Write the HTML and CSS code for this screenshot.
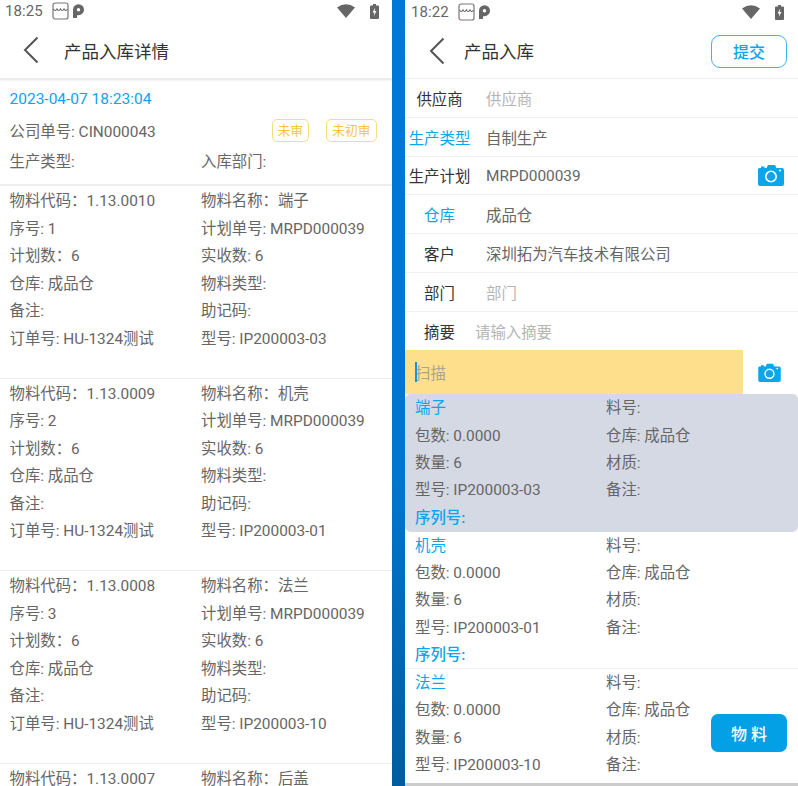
FILE: index.html
```html
<!DOCTYPE html>
<html lang="zh">
<head>
<meta charset="utf-8">
<title>产品入库</title>
<link rel="stylesheet" href="styles.css">
<svg class="defs" width="0" height="0" aria-hidden="true">
  <symbol id="shop" viewBox="0 0 17 18"><path d="M3 1h11a2 2 0 0 1 2 2v12a2 2 0 0 1-2 2H3a2 2 0 0 1-2-2V3a2 2 0 0 1 2-2z" fill="none" stroke="#777" stroke-width="1.2"/><path d="M1.500 7q1.700 3 3.500 0q1.700 3 3.500 0q1.700 3 3.500 0q1.700 3 3.500 0" fill="none" stroke="#666" stroke-width="1.200"/></symbol>
  <symbol id="park" viewBox="0 0 11 14"><path d="M0 5.700a5.500 5.500 0 1 1 5.500 5.500H4V14H0z" fill="#666"/><circle cx="5.500" cy="5.700" r="1.700" fill="#fff"/></symbol>
  <symbol id="wifi" viewBox="0 0 18 14"><path d="M0 3.500Q9-3 18 3.500L9 14z" fill="#666"/></symbol>
  <symbol id="batt" viewBox="0 0 9 15"><path d="M3 0h3v1.500h2a1 1 0 0 1 1 1V14a1 1 0 0 1-1 1H1a1 1 0 0 1-1-1V2.500a1 1 0 0 1 1-1h2z" fill="#666"/><path d="M5.200 3.500 2.600 8.500h1.700L3.800 12l2.700-5H4.700z" fill="#fff"/></symbol>
  <symbol id="back" viewBox="0 0 16 28"><path d="M14.500 1.500 2 14l12.500 12.500" fill="none" stroke="#555" stroke-width="2"/></symbol>
  <symbol id="cam" viewBox="0 0 26 22"><path d="M1.500 4H3V2.500h3.500V4h2L10 1h7l1.500 3H24a2 2 0 0 1 2 2v14a2 2 0 0 1-2 2H2a2 2 0 0 1-2-2V5.500A1.500 1.500 0 0 1 1.500 4z" fill="#0ba5ec"/><circle cx="13" cy="12.500" r="5.200" fill="none" stroke="#fff" stroke-width="1.600"/><circle cx="22" cy="6.500" r="1" fill="#fff"/></symbol>
</svg>
</head>
<body>
<div class="screen">
  <section class="panel">
    <div class="status">
      <span class="clock">18:25</span>
      <svg class="i-shop"><use href="#shop"/></svg><svg class="i-park"><use href="#park"/></svg>
      <span class="grow"></span>
      <svg class="i-wifi"><use href="#wifi"/></svg><svg class="i-batt"><use href="#batt"/></svg>
    </div>
    <header class="nav nav-left">
      <svg class="i-back"><use href="#back"/></svg>
      <h1 class="title">产品入库详情</h1>
    </header>
    <div class="summary">
      <div class="date">2023-04-07 18:23:04</div>
      <div class="company">
        <span>公司单号: CIN000043</span>
        <span class="tags"><span class="tag">未审</span><span class="tag">未初审</span></span>
      </div>
      <div class="pair"><span>生产类型:</span><span>入库部门:</span></div>
    </div>
    <div class="records">
      <div class="record">
        <span>物料代码：1.13.0010</span><span>物料名称：端子</span>
        <span>序号: 1</span><span>计划单号: MRPD000039</span>
        <span>计划数：6</span><span>实收数: 6</span>
        <span>仓库: 成品仓</span><span>物料类型:</span>
        <span>备注:</span><span>助记码:</span>
        <span>订单号: HU-1324测试</span><span>型号: IP200003-03</span>
      </div>
      <div class="record">
        <span>物料代码：1.13.0009</span><span>物料名称：机壳</span>
        <span>序号: 2</span><span>计划单号: MRPD000039</span>
        <span>计划数：6</span><span>实收数: 6</span>
        <span>仓库: 成品仓</span><span>物料类型:</span>
        <span>备注:</span><span>助记码:</span>
        <span>订单号: HU-1324测试</span><span>型号: IP200003-01</span>
      </div>
      <div class="record">
        <span>物料代码：1.13.0008</span><span>物料名称：法兰</span>
        <span>序号: 3</span><span>计划单号: MRPD000039</span>
        <span>计划数：6</span><span>实收数: 6</span>
        <span>仓库: 成品仓</span><span>物料类型:</span>
        <span>备注:</span><span>助记码:</span>
        <span>订单号: HU-1324测试</span><span>型号: IP200003-10</span>
      </div>
      <div class="record">
        <span>物料代码：1.13.0007</span><span>物料名称：后盖</span>
      </div>
    </div>
  </section>

  <div class="divider"></div>

  <section class="panel panel-right">
    <div class="status status-right">
      <span class="clock">18:22</span>
      <svg class="i-shop"><use href="#shop"/></svg><svg class="i-park"><use href="#park"/></svg>
      <span class="grow"></span>
      <svg class="i-wifi"><use href="#wifi"/></svg><svg class="i-batt"><use href="#batt"/></svg>
    </div>
    <header class="nav nav-right">
      <svg class="i-back"><use href="#back"/></svg>
      <h1 class="title">产品入库</h1>
      <span class="grow"></span>
      <button class="submit">提交</button>
    </header>
    <form class="form">
      <div class="field"><label class="lbl">供应商</label><span class="val ph">供应商</span></div>
      <div class="field"><label class="lbl lbl-link">生产类型</label><span class="val">自制生产</span></div>
      <div class="field"><label class="lbl">生产计划</label><span class="val grow code">MRPD000039</span><svg class="i-cam"><use href="#cam"/></svg></div>
      <div class="field"><label class="lbl lbl-link">仓库</label><span class="val">成品仓</span></div>
      <div class="field"><label class="lbl">客户</label><span class="val">深圳拓为汽车技术有限公司</span></div>
      <div class="field"><label class="lbl">部门</label><span class="val ph">部门</span></div>
      <div class="field field-last"><label class="lbl">摘要</label><span class="val ph memo">请输入摘要</span></div>
    </form>
    <div class="scan">
      <div class="scan-box"><span class="caret"></span><span class="scan-ph">扫描</span></div>
      <svg class="i-cam i-cam-scan"><use href="#cam"/></svg>
    </div>
    <div class="cards">
      <article class="card card-active">
        <span class="name">端子</span><span>料号:</span>
        <span>包数: 0.0000</span><span>仓库: 成品仓</span>
        <span>数量: 6</span><span>材质:</span>
        <span>型号: IP200003-03</span><span>备注:</span>
        <span class="serial">序列号:</span>
      </article>
      <article class="card">
        <span class="name">机壳</span><span>料号:</span>
        <span>包数: 0.0000</span><span>仓库: 成品仓</span>
        <span>数量: 6</span><span>材质:</span>
        <span>型号: IP200003-01</span><span>备注:</span>
        <span class="serial">序列号:</span>
      </article>
      <article class="card">
        <span class="name">法兰</span><span>料号:</span>
        <span>包数: 0.0000</span><span>仓库: 成品仓</span>
        <span>数量: 6</span><span>材质:</span>
        <span>型号: IP200003-10</span><span>备注:</span>
      </article>
      <button class="fab">物 料</button>
    </div>
  </section>
</div>
</body>
</html>
```
FILE: styles.css
```css
* { box-sizing: border-box; }
html, body { margin: 0; padding: 0; height: 786px; overflow: hidden; background: #fff; }
body { font-family: Roboto, "Noto Sans CJK SC", sans-serif; font-size: 15.4px; color: #666; }
.defs { position: absolute; }
.screen { display: flex; width: 798px; height: 786px; overflow: hidden; }
.panel { width: 392px; height: 786px; flex: none; display: flex; flex-direction: column; overflow: hidden; }
.panel-right { width: 393px; }
.divider { width: 13px; flex: none; background: linear-gradient(#0078d7 0%, #0076d0 60%, #015c9f 100%); }
.grow { flex: 1; }

.status { height: 22px; display: flex; align-items: center; padding: 0 7px 0 5px; flex: none; }
.status-right { padding: 0 14px 0 6px; margin-top: 1px; }
.clock { font-size: 15px; color: #666; letter-spacing: 0.1px; width: 40px; }
.i-shop { width: 17px; height: 18px; margin: 0 2px 0 7px; }
.i-park { width: 11px; height: 14px; margin-left: 2px; }
.i-wifi { width: 18px; height: 14px; margin-right: 15px; }
.i-batt { width: 9px; height: 15px; margin-right: 6px; }
.status-right .i-batt { margin-right: 0; }

.nav { display: flex; align-items: center; flex: none; height: 56px; }
.i-back { width: 16px; height: 28px; flex: none; }
.title { margin: 0; font-size: 17.500px; font-weight: 400; color: #333; }
.nav-left { padding-left: 23px; box-shadow: 0 1px 2px rgba(0,0,0,.12); border-bottom: 1px solid #ededed; height: 57px; position: relative; }
.nav-left .title { margin-left: 25px; }
.nav-right { padding: 0 11px 0 24px; border-bottom: 1px solid #eee; }
.nav-right .title { margin-left: 19px; }
.submit { width: 76px; height: 33px; border: 1px solid #39b5ef; border-radius: 9px; background: #fff; color: #0ba5ec; font: 500 16px Roboto, "Noto Sans CJK SC", sans-serif; padding: 0; margin-top: 1px; }

.summary { height: 107px; padding: 9px 9.500px 0; border-bottom: 2px solid #eee; flex: none; }
.date { color: #0ba5ec; font-size: 15.500px; line-height: 22px; }
.company { display: flex; justify-content: space-between; align-items: center; margin-top: 8px; height: 24px; }
.tags { display: flex; gap: 17px; padding-right: 6px; }
.tag { border: 1px solid #fbdc7c; border-radius: 5px; color: #f5c63f; font-size: 12.800px; padding: 0 5px; height: 23px; line-height: 21px; }
.pair { display: grid; grid-template-columns: 191.500px 1fr; margin-top: 8px; line-height: 24px; }

.records { flex: none; }
.record { display: grid; grid-template-columns: 191.500px 1fr; grid-auto-rows: 27.500px; height: 192.700px; padding: 2px 9.500px 0; border-bottom: 1px solid #eee; line-height: 27.500px; white-space: nowrap; }

.form { flex: none; }
.field { height: 38.800px; display: flex; align-items: center; border-bottom: 1px solid #f1f1f1; padding-right: 14px; }
.field-last { border-bottom: 0; height: 38.500px; }
.lbl { width: 69px; margin-right: 12px; flex: none; text-align: center; color: #333; white-space: nowrap; }
.lbl-link { color: #0ba5ec; }
.val { color: #666; }
.code { padding-top: 2px; }
.ph { color: #b5b5b5; }
.memo { margin-left: -11px; }
.i-cam { width: 26px; height: 22px; flex: none; }

.scan { display: flex; align-items: center; height: 44px; flex: none; }
.scan-box { width: 338px; height: 44px; background: #fddf8c; display: flex; align-items: center; padding-left: 10px; }
.caret { width: 2px; height: 20px; background: #0a9ae0; margin-right: -2px; position: relative; }
.scan-ph { color: #a8a58a; }
.i-cam-scan { width: 23px; height: 19px; margin-left: 15px; }

.cards { position: relative; height: 392px; border-bottom: 3px solid #ccc; flex: none; overflow: hidden; }
.card { display: grid; grid-template-columns: 191px 1fr; grid-auto-rows: 27.400px; height: 137.400px; padding: 1px 10px 0; line-height: 27.400px; border-bottom: 1px solid #f2f2f2; white-space: nowrap; }
.card-active { background: #d5d9e4; border-radius: 6px; border-bottom: 0; box-shadow: 0 -1px 2px rgba(0,0,0,.08); }
.name { color: #0ba5ec; }
.serial { color: #0ba5ec; font-weight: 500; grid-column: 1 / -1; }
.fab { position: absolute; right: 11px; top: 320px; width: 76px; height: 38px; border: 0; border-radius: 7px; background: #04a0e6; color: #fff; font: 500 16px Roboto, "Noto Sans CJK SC", sans-serif; padding: 0; }
```
